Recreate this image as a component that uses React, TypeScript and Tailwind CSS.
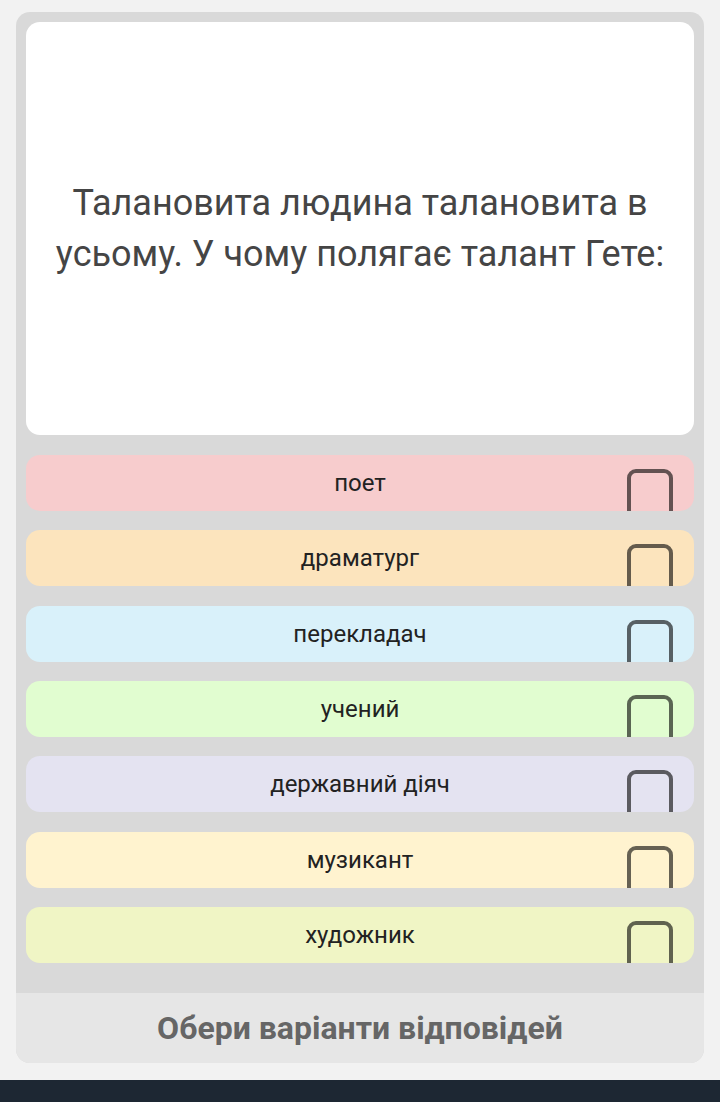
import React from "react";

const options = [
  { label: "поет", bg: "bg-[#f7cccd]" },
  { label: "драматург", bg: "bg-[#fce4bd]" },
  { label: "перекладач", bg: "bg-[#d9f1fa]" },
  { label: "учений", bg: "bg-[#e1fdd0]" },
  { label: "державний діяч", bg: "bg-[#e4e3f1]" },
  { label: "музикант", bg: "bg-[#fff3cf]" },
  { label: "художник", bg: "bg-[#f0f5c5]" },
];

export default function App() {
  return (
    <div className="w-[720px] h-[1102px] bg-[#f2f2f2] flex flex-col" style={{ fontFamily: "Roboto, 'Noto Sans', sans-serif" }}>
      <div className="mx-[16px] mt-[12px] h-[1051px] rounded-[14px] bg-[#d9d9d9] overflow-hidden flex flex-col">
        <div className="px-[10px] pt-[10px] pb-[30px] flex flex-col">
          <div className="h-[413px] bg-white rounded-[14px] flex items-center justify-center px-[10px]">
            <p className="text-center text-[36px] leading-[51px] text-[#454545]">
              Талановита людина талановита в
              <br />
              усьому. У чому полягає талант Гете:
            </p>
          </div>
          <div className="mt-[20px] flex flex-col gap-[19.33px]">
            {options.map((o) => (
              <div key={o.label} className={`relative h-[56px] rounded-[14px] overflow-hidden ${o.bg} flex items-center justify-center`}>
                <span className="text-[24px] text-[#222]">{o.label}</span>
                <div className="absolute left-[601px] top-[14px] w-[46px] h-[52px] border-[4px] border-black/60 rounded-[9px]" />
              </div>
            ))}
          </div>
        </div>
        <div className="flex-1 bg-[#e6e6e6] flex items-center justify-center">
          <span className="text-[32px] font-bold text-[#666]">Обери варіанти відповідей</span>
        </div>
      </div>
      <div className="mt-auto h-[22px] bg-[#1d2733]" />
    </div>
  );
}
